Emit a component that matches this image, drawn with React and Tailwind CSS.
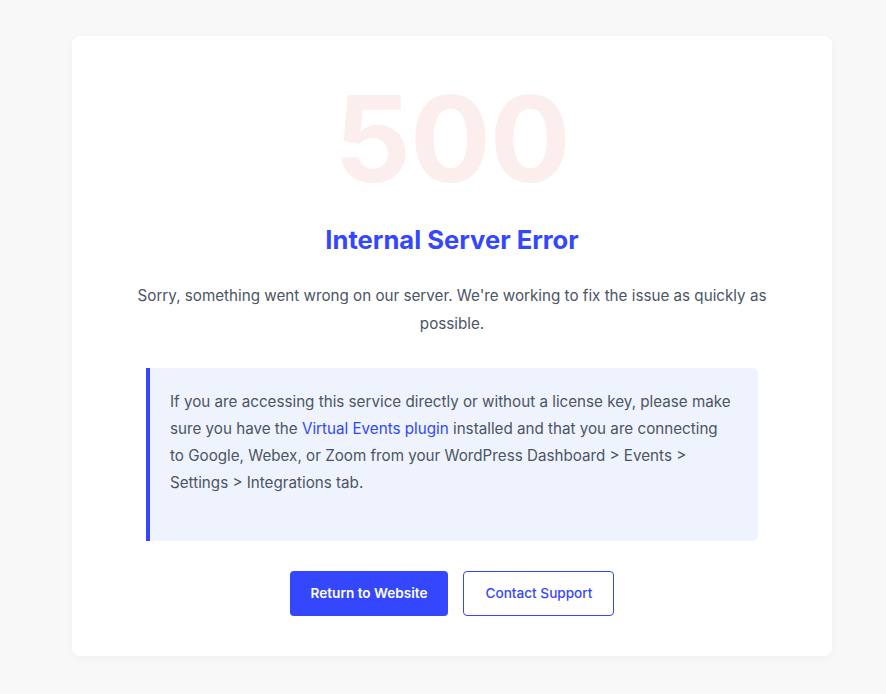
import React from 'react';

const ErrorPage = () => {
  return (
    <div
      className="min-h-[694px] bg-[#f8f8f8] pt-[36px] pb-[38px]"
      style={{ fontFamily: 'Inter, "Noto Sans", sans-serif' }}
    >
      <div className="ml-[72px] w-[760px] rounded-lg bg-white p-10 shadow-[0_2px_10px_rgba(0,0,0,0.04)] text-center">
        <div className="pt-[3px] text-[120px] font-bold leading-none text-[#fdeeee] tracking-[-1px]">500</div>

        <h1 className="mt-[26px] text-[25.6px] font-bold leading-[1.2] text-[#3547fd]">
          Internal Server Error
        </h1>

        <p className="mt-[26px] text-[15.2px] leading-7 text-[#4b5563]">
          Sorry, something went wrong on our server. We're working to fix the issue as quickly as possible.
        </p>

        <div className="mx-auto mt-[30px] w-[612px] rounded-r-md border-l-4 border-[#3547fd] bg-[#eff3fe] pl-5 pr-6 pt-5 pb-[45px] text-left">
          <p className="text-[15.2px] leading-[27px] text-[#4b5563]">
            If you are accessing this service directly or without a license key, please make sure you have the{' '}
            <a href="#" className="text-[#2f49f5]">Virtual Events plugin</a> installed and that you are connecting
            to Google, Webex, or Zoom from your WordPress Dashboard &gt; Events &gt; Settings &gt; Integrations tab.
          </p>
        </div>

        <div className="mt-[30px] flex justify-center gap-[15px]">
          <a
            href="#"
            className="rounded bg-[#3547fd] px-[21px] py-3 text-[13.6px] font-semibold leading-[21px] text-white"
          >
            Return to Website
          </a>
          <a
            href="#"
            className="rounded border border-[#3547fd] bg-white px-[21px] py-3 text-[13.6px] font-medium leading-[19px] text-[#3547fd]"
          >
            Contact Support
          </a>
        </div>
      </div>
    </div>
  );
};

export default ErrorPage;
